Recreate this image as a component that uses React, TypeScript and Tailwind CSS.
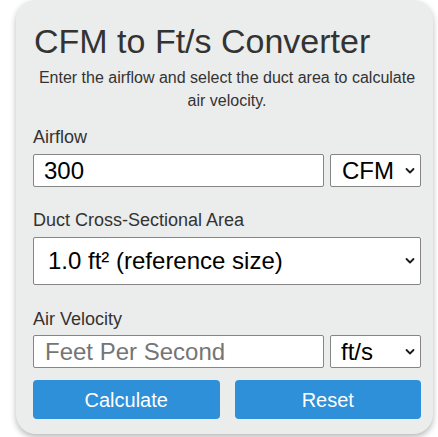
import React from "react";

function Chevron() {
  return (
    <svg
      className="pointer-events-none absolute right-[5px] top-1/2 -translate-y-1/2"
      width="10"
      height="7"
      viewBox="0 0 10 7"
      fill="none"
    >
      <path d="M1.5 1.5 L5 5 L8.5 1.5" stroke="#1a1a1a" strokeWidth="1.8" strokeLinecap="round" strokeLinejoin="round" />
    </svg>
  );
}

export default function App() {
  return (
    <div className="min-h-[437px] w-[438px] bg-white" style={{ fontFamily: '"Liberation Sans", Arial, sans-serif' }}>
      <div className="ml-[16px] w-[417px] rounded-[20px] bg-[#ebecec] pb-[15px] pl-[17px] pr-[12px] pt-[21px] shadow-[0_3px_6px_rgba(0,0,0,0.28)]">
        <h1 className="text-[34px] leading-[40px] text-[#333333] ml-[1px]">CFM to Ft/s Converter</h1>
        <p className="mt-[5px] text-center text-[16px] leading-[23px] text-[#333333]">
          Enter the airflow and select the duct area to calculate
          <br />
          air velocity.
        </p>
        <label className="mt-[13px] block text-[18px] leading-[24px] text-[#333333]">Airflow</label>
        <div className="mt-[5px] flex gap-[6px]">
          <div className="flex h-[33px] w-[291px] items-center rounded-[2px] border border-[#858585] bg-white pl-[10px] text-[24px] text-black">
            300
          </div>
          <div className="relative flex h-[33px] flex-1 items-center rounded-[2px] border border-[#858585] bg-white pl-[11px] text-[24px] text-black">
            CFM
            <Chevron />
          </div>
        </div>
        <label className="mt-[21px] block text-[18px] leading-[24px] text-[#333333]">Duct Cross-Sectional Area</label>
        <div className="relative mt-[5px] flex h-[48px] items-center rounded-[2px] border border-[#858585] bg-white pl-[14px] text-[24px] text-black">
          1.0 ft² (reference size)
          <Chevron />
        </div>
        <label className="mt-[22px] block text-[18px] leading-[24px] text-[#333333]">Air Velocity</label>
        <div className="mt-[4px] flex gap-[6px]">
          <div className="flex h-[33px] w-[291px] items-center rounded-[2px] border border-[#858585] bg-white pl-[11px] text-[24px] text-[#757575]">
            Feet Per Second
          </div>
          <div className="relative flex h-[33px] flex-1 items-center rounded-[2px] border border-[#858585] bg-white pl-[10px] text-[24px] text-black">
            ft/s
            <Chevron />
          </div>
        </div>
        <div className="mt-[12px] grid grid-cols-2 gap-[15px]">
          <button className="h-[39px] rounded-[4px] bg-[#2e90d9] text-[20px] text-white">Calculate</button>
          <button className="h-[39px] rounded-[4px] bg-[#2e90d9] text-[20px] text-white">Reset</button>
        </div>
      </div>
    </div>
  );
}
